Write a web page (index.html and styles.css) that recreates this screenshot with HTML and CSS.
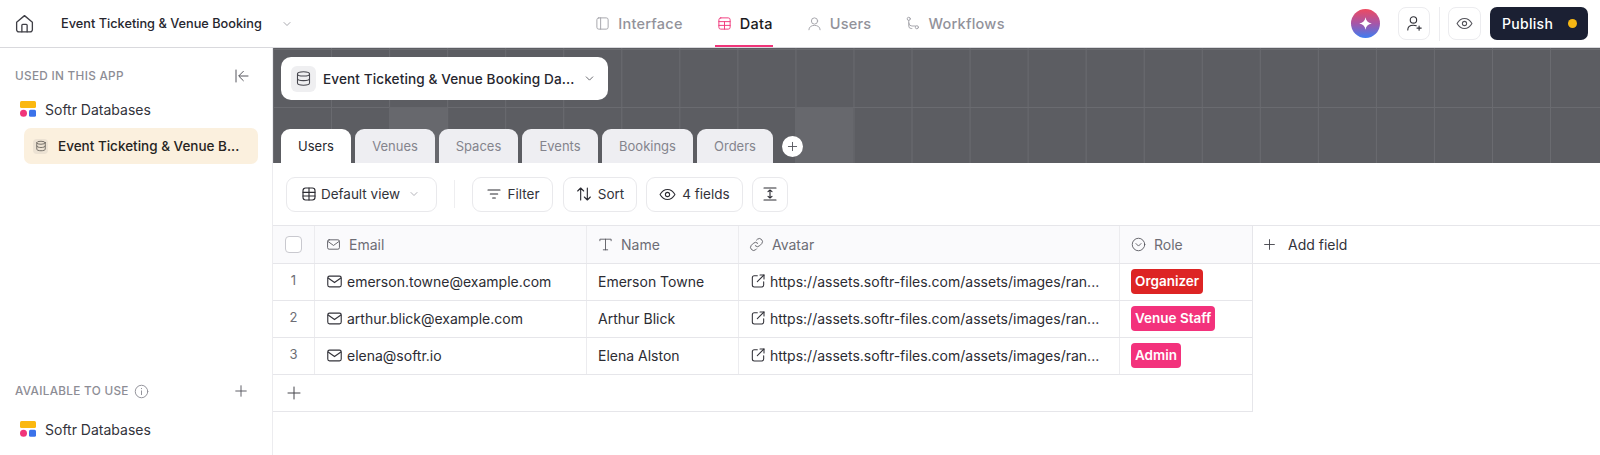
FILE: index.html
```html
<!DOCTYPE html>
<html lang="en">
<head>
<meta charset="utf-8">
<title>Event Ticketing &amp; Venue Booking</title>
<link rel="stylesheet" href="styles.css">
</head>
<body>
<svg class="defs" width="0" height="0" aria-hidden="true">
  <symbol id="i-db" viewBox="0 0 24 24"><ellipse cx="12" cy="5.5" rx="8.5" ry="3"/><path d="M3.5 5.5v13c0 1.7 3.8 3 8.5 3s8.500-1.300 8.500-3v-13"/><path d="M3.500 12c0 1.700 3.800 3 8.500 3s8.500-1.300 8.500-3"/></symbol>
  <symbol id="i-logo" viewBox="0 0 16 16"><rect x="0" y="0" width="16" height="7" rx="1.500" fill="#fbb80f" stroke="none"/><circle cx="3.500" cy="12.300" r="3.500" fill="#f0357a" stroke="none"/><rect x="9" y="8.800" width="7" height="7" rx="1.500" fill="#3b72ea" stroke="none"/></symbol>
  <symbol id="i-mail" viewBox="0 0 24 24"><rect x="2.500" y="4.500" width="19" height="15" rx="2.500"/><path d="M3 7l9 6.500L21 7"/></symbol>
  <symbol id="i-ext" viewBox="0 0 24 24"><path d="M11 4H6.500A3 3 0 0 0 3.500 7v11a3 3 0 0 0 3 3h11a3 3 0 0 0 3-3v-5"/><path d="M11 13l10-10"/><path d="M15 3h6v6"/></symbol>
  <symbol id="i-chev" viewBox="0 0 24 24"><path d="M6 9l6 6 6-6"/></symbol>
  <symbol id="i-plus" viewBox="0 0 24 24"><path d="M12 3v18M3 12h18"/></symbol>
  <symbol id="i-eye" viewBox="0 0 24 24"><path d="M1.500 12S5.500 5 12 5s10.500 7 10.500 7-4 7-10.500 7S1.500 12 1.500 12z"/><circle cx="12" cy="12" r="3"/></symbol>
</svg>

<div class="app">
  <header class="topbar">
    <div class="top-left">
      <svg class="ic home" viewBox="0 0 24 24"><path d="M3 10.500L12 3l9 7.500V19a2.500 2.500 0 0 1-2.500 2.500h-13A2.500 2.500 0 0 1 3 19z"/><path d="M9 21.500V14a1 1 0 0 1 1-1h4a1 1 0 0 1 1 1v7.500"/></svg>
      <span class="app-name">Event Ticketing &amp; Venue Booking</span>
      <svg class="ic app-chev"><use href="#i-chev"/></svg>
    </div>
    <nav class="nav">
      <a class="nav-item"><svg class="ic nav-ic" viewBox="0 0 24 24"><rect x="3" y="3" width="18" height="18" rx="3"/><path d="M9 3v18"/></svg>Interface</a>
      <a class="nav-item active"><svg class="ic nav-ic pink" viewBox="0 0 24 24"><rect x="3" y="3" width="18" height="18" rx="3"/><path d="M3 9h18M3 15h18M12 9v12"/></svg>Data</a>
      <a class="nav-item"><svg class="ic nav-ic" viewBox="0 0 24 24"><circle cx="12" cy="8" r="5"/><path d="M3 22c0-4.500 4-7 9-7s9 2.500 9 7"/></svg>Users</a>
      <a class="nav-item"><svg class="ic nav-ic" viewBox="0 0 24 24"><circle cx="6" cy="4.500" r="2.500"/><circle cx="19" cy="18" r="2.500"/><path d="M6 7v9a4 4 0 0 0 4 4h1M6 11a5 5 0 0 0 5 5h5.500"/></svg>Workflows</a>
    </nav>
    <div class="top-right">
      <span class="ai"><svg viewBox="0 0 24 24" class="ai-star"><path d="M12 2c1 6 4 9 10 10-6 1-9 4-10 10-1-6-4-9-10-10 6-1 9-4 10-10z"/></svg></span>
      <button class="square-btn invite"><svg class="ic" viewBox="0 0 24 24"><circle cx="10.500" cy="7" r="4.500"/><path d="M2.500 21c0-4.500 3.500-6.500 8-6.500 1.500 0 2.800.2 4 .7"/><path d="M18.500 15.500v6M15.500 18.500h6"/></svg></button>
      <span class="top-div"></span>
      <button class="square-btn eye"><svg class="ic"><use href="#i-eye"/></svg></button>
      <button class="publish">Publish<span class="dot"></span></button>
    </div>
  </header>

  <div class="body">
    <aside class="sidebar">
      <div class="side-top">
        <div class="side-head">
          <span class="side-label">USED IN THIS APP</span>
          <svg class="ic collapse" viewBox="0 0 24 24"><path d="M3 3v18M21 12H8M14 5l-7 7 7 7"/></svg>
        </div>
        <div class="source"><svg class="logo"><use href="#i-logo"/></svg>Softr Databases</div>
        <div class="selected">
          <span class="sel-box"><svg class="ic"><use href="#i-db"/></svg></span>
          <span class="sel-text">Event Ticketing &amp; Venue B...</span>
        </div>
      </div>
      <div class="side-bottom">
        <div class="side-head">
          <span class="side-label">AVAILABLE TO USE</span>
          <svg class="ic info" viewBox="0 0 24 24"><circle cx="12" cy="12" r="10"/><path d="M12 11v6M12 7v.5"/></svg>
          <svg class="ic side-plus"><use href="#i-plus"/></svg>
        </div>
        <div class="source"><svg class="logo"><use href="#i-logo"/></svg>Softr Databases</div>
      </div>
    </aside>

    <main class="main">
      <section class="banner">
        <div class="db-select">
          <span class="db-box"><svg class="ic"><use href="#i-db"/></svg></span>
          <span class="db-name">Event Ticketing &amp; Venue Booking Da...</span>
          <svg class="ic db-chev"><use href="#i-chev"/></svg>
        </div>
        <div class="tabs">
          <span class="tab active">Users</span>
          <span class="tab">Venues</span>
          <span class="tab">Spaces</span>
          <span class="tab">Events</span>
          <span class="tab">Bookings</span>
          <span class="tab">Orders</span>
          <span class="tab-add"><svg class="ic"><use href="#i-plus"/></svg></span>
        </div>
      </section>

      <section class="toolbar">
        <button class="tool tool-view"><svg class="ic" viewBox="0 0 24 24"><rect x="3" y="3" width="18" height="18" rx="4"/><path d="M3 9.500h18M3 15h18M12 3v18"/></svg>Default view<svg class="ic tool-chev"><use href="#i-chev"/></svg></button>
        <span class="tool-div"></span>
        <button class="tool tool-filter"><svg class="ic" viewBox="0 0 24 24"><path d="M3 6h18M6.500 12h11M10 18h4"/></svg>Filter</button>
        <button class="tool tool-sort"><svg class="ic" viewBox="0 0 24 24"><path d="M7 21V3M2.500 7.500L7 3l4.500 4.500M17 3v18M12.500 16.500L17 21l4.500-4.500"/></svg>Sort</button>
        <button class="tool tool-fields"><svg class="ic"><use href="#i-eye"/></svg>4 fields</button>
        <button class="tool tool-height"><svg class="ic" viewBox="0 0 24 24"><path d="M3 3h18M3 21h18M12 6v12M9 8.500L12 6l3 2.500M9 15.500l3 2.500 3-2.500"/></svg></button>
      </section>

      <section class="grid">
        <div class="row head">
          <div class="cell num"><span class="check"></span></div>
          <div class="cell c-email"><svg class="ic h-ic"><use href="#i-mail"/></svg>Email</div>
          <div class="cell c-name"><svg class="ic h-ic" viewBox="0 0 24 24"><path d="M3 6V3.500h18V6M12 3.500v17M8.500 20.500h7"/></svg>Name</div>
          <div class="cell c-avatar"><svg class="ic h-ic" viewBox="0 0 24 24"><path d="M10 14a5 5 0 0 0 7 0l3.500-3.500a5 5 0 0 0-7-7L12 5"/><path d="M14 10a5 5 0 0 0-7 0l-3.500 3.500a5 5 0 0 0 7 7L12 19"/></svg>Avatar</div>
          <div class="cell c-role"><svg class="ic h-ic" viewBox="0 0 24 24"><circle cx="12" cy="12" r="10"/><path d="M8 10.500l4 4 4-4"/></svg>Role</div>
          <div class="cell add-field"><svg class="ic"><use href="#i-plus"/></svg>Add field</div>
        </div>
        <div class="row">
          <div class="cell num">1</div>
          <div class="cell c-email"><svg class="ic r-ic"><use href="#i-mail"/></svg>emerson.towne@example.com</div>
          <div class="cell c-name">Emerson Towne</div>
          <div class="cell c-avatar"><svg class="ic r-ic"><use href="#i-ext"/></svg>https://assets.softr-files.com/assets/images/ran...</div>
          <div class="cell c-role"><span class="tag red">Organizer</span></div>
        </div>
        <div class="row">
          <div class="cell num">2</div>
          <div class="cell c-email"><svg class="ic r-ic"><use href="#i-mail"/></svg>arthur.blick@example.com</div>
          <div class="cell c-name">Arthur Blick</div>
          <div class="cell c-avatar"><svg class="ic r-ic"><use href="#i-ext"/></svg>https://assets.softr-files.com/assets/images/ran...</div>
          <div class="cell c-role"><span class="tag pink-tag">Venue Staff</span></div>
        </div>
        <div class="row">
          <div class="cell num">3</div>
          <div class="cell c-email"><svg class="ic r-ic"><use href="#i-mail"/></svg>elena@softr.io</div>
          <div class="cell c-name">Elena Alston</div>
          <div class="cell c-avatar"><svg class="ic r-ic"><use href="#i-ext"/></svg>https://assets.softr-files.com/assets/images/ran...</div>
          <div class="cell c-role"><span class="tag pink-tag">Admin</span></div>
        </div>
        <div class="row add-row"><svg class="ic add-ic"><use href="#i-plus"/></svg></div>
      </section>
    </main>
  </div>
</div>
</body>
</html>
```

FILE: styles.css
```css
* { box-sizing: border-box; }
html, body { margin: 0; height: 100%; overflow: hidden; background: #fff; }
body { font-family: Inter, "Liberation Sans", sans-serif; color: #26262e; font-size: 14px; }
button { font-family: inherit; color: inherit; background: #fff; padding: 0; margin: 0; }
.defs { position: absolute; }
.ic { fill: none; stroke: currentColor; stroke-width: 1.7; stroke-linecap: round; stroke-linejoin: round; flex: none; width: 16px; height: 16px; }

.app { height: 100vh; display: flex; flex-direction: column; }

/* top bar */
.topbar { height: 48px; flex: none; display: grid; grid-template-columns: 1fr auto 1fr; align-items: center; border-bottom: 1px solid #d9d9dd; }
.top-left { display: flex; align-items: center; padding-left: 14px; }
.home { width: 21px; height: 21px; color: #3f3f46; stroke-width: 1.5; }
.app-name { margin-left: 26px; font-size: 12.75px; font-weight: 500; color: #26262e; }
.app-chev { width: 12px; height: 12px; margin-left: 19px; color: #8b8b93; stroke-width: 1.5; }

.nav { display: flex; align-items: stretch; gap: 34px; height: 47px; }
.nav-item { display: flex; align-items: center; gap: 8px; font-size: 14.5px; font-weight: 500; color: #92929a; letter-spacing: .25px; border-bottom: 2px solid transparent; padding-top: 2px; }
.nav-item.active { color: #1a1a20; border-bottom-color: #f0357a; padding-left: 2px; margin-left: -2px; }
.nav-ic { width: 15px; height: 15px; color: #a2a2a9; stroke-width: 1.5; }
.nav-ic.pink { color: #f0357a; }

.top-right { display: flex; align-items: center; justify-content: flex-end; padding-right: 12px; }
.ai { width: 29px; height: 29px; border-radius: 50%; background: linear-gradient(180deg, #ee4a60 0%, #a656a8 50%, #3d7df2 100%); display: flex; align-items: center; justify-content: center; margin-right: 18px; }
.ai-star { width: 15px; height: 15px; fill: #fff; }
.square-btn { width: 32px; height: 33px; border: 1px solid #ececef; border-radius: 8px; display: flex; align-items: center; justify-content: center; }
.invite .ic { width: 17px; height: 17px; color: #33333a; stroke-width: 1.6; }
.eye { width: 33px; margin-left: -1px; }
.eye .ic { width: 17px; height: 17px; color: #55555c; stroke-width: 1.5; }
.top-div { width: 1px; height: 34px; background: #ececef; margin: 0 9px; }
.publish { margin-left: 9px; width: 98px; height: 33px; border: 0; border-radius: 7px; background: #1b2033; color: #fff; font-size: 14px; font-weight: 500; display: flex; align-items: center; padding-left: 12px; letter-spacing: .3px; }
.dot { width: 9px; height: 9px; border-radius: 50%; background: #f6b714; margin-left: 15px; }

/* layout */
.body { flex: 1; display: flex; min-height: 0; }
.sidebar { width: 273px; flex: none; border-right: 1px solid #ececef; display: flex; flex-direction: column; justify-content: space-between; padding-bottom: 17px; }
.side-head { display: flex; align-items: center; height: 16px; padding: 0 22px 0 15px; }
.side-bottom .side-head { padding-right: 24px; }
.side-top { padding-top: 20px; }
.side-label { font-size: 11.75px; font-weight: 500; color: #8d8d95; letter-spacing: .3px; }
.collapse { margin-left: auto; width: 16px; height: 16px; color: #55555c; stroke-width: 1.5; }
.info { width: 15px; height: 15px; margin-left: 5px; color: #8d8d95; stroke-width: 1.5; }
.side-plus { margin-left: auto; width: 14px; height: 14px; color: #55555c; stroke-width: 1.6; }
.source { display: flex; align-items: center; gap: 9px; padding-left: 20px; font-size: 14px; color: #33333a; }
.side-top .source { margin-top: 14px; height: 22px; }
.side-bottom .source { margin-top: 21px; height: 18px; }
.logo { width: 16px; height: 16px; flex: none; }
.selected { margin: 8px 14px 0 24px; height: 36px; border-radius: 7px; background: #fbf0de; display: flex; align-items: center; padding-left: 9px; gap: 10px; }
.sel-box { width: 15px; height: 15px; border-radius: 4px; background: #ece2d3; display: flex; align-items: center; justify-content: center; }
.sel-box .ic { width: 12px; height: 12px; color: #6b6660; stroke-width: 1.8; }
.sel-text { font-size: 13.5px; font-weight: 500; color: #26241f; white-space: nowrap; }

.main { flex: 1; min-width: 0; display: flex; flex-direction: column; }

/* banner */
.banner {
  height: 115px; flex: none; padding: 9px 0 0 8px; display: flex; flex-direction: column;
  background-color: #5c5d62;
  background-image:
    linear-gradient(#67686d, #67686d),
    linear-gradient(#67686d, #67686d),
    linear-gradient(to right, #6a6b70 1px, transparent 1px),
    linear-gradient(to bottom, #6a6b70 1px, transparent 1px);
  background-size: 58px 56px, 58px 56px, 58.06px 58px, 58px 58px;
  background-position: 116px 59px, 522px 59px, 0 0, 0 1px;
  background-repeat: no-repeat, no-repeat, repeat, repeat;
}
.db-select { width: 327px; height: 43px; flex: none; background: #fff; border-radius: 10px; display: flex; align-items: center; padding-left: 10px; }
.db-box { width: 25px; height: 26px; background: #efeff1; border-radius: 6px; display: flex; align-items: center; justify-content: center; }
.db-box .ic { width: 17px; height: 17px; color: #47474e; stroke-width: 1.5; }
.db-name { margin-left: 7px; font-size: 13.6px; font-weight: 500; white-space: nowrap; color: #26262e; letter-spacing: .1px; }
.db-chev { width: 13px; height: 13px; margin-left: auto; margin-right: 12px; color: #55555c; stroke-width: 1.6; }

.tabs { display: flex; align-items: flex-end; gap: 4px; margin-top: 29px; height: 34px; }
.tab { height: 34px; display: flex; align-items: center; justify-content: center; padding: 0 17px; background: #eeeef2; border-radius: 9px 9px 0 0; font-size: 13px; color: #84848d; }
.tab:nth-child(1) { width: 70px; padding: 0; }
.tab:nth-child(2) { width: 80px; padding: 0; }
.tab:nth-child(3) { width: 79px; padding: 0; }
.tab:nth-child(4) { width: 76px; padding: 0; }
.tab:nth-child(5) { width: 91px; padding: 0; }
.tab:nth-child(6) { width: 76px; padding: 0; }
.tab.active { background: #fff; color: #26262e; }
.tab-add { width: 21px; height: 21px; border-radius: 50%; background: #fff; display: flex; align-items: center; justify-content: center; align-self: center; margin-left: 5px; }
.tab-add .ic { width: 11px; height: 11px; color: #55555c; stroke-width: 2; }

/* toolbar */
.toolbar { height: 62px; flex: none; display: flex; align-items: center; padding-left: 13px; gap: 10px; }
.tool { height: 35px; border: 1px solid #e9e9ec; border-radius: 9px; display: flex; align-items: center; justify-content: center; gap: 6px; font-size: 13.5px; color: #33333a; }
.tool .ic { width: 16px; height: 16px; color: #2c2c33; stroke-width: 1.7; }
.tool-view { width: 151px; gap: 4px; padding-right: 2px; }
.tool-view .tool-chev { width: 12px; height: 12px; margin-left: 4px; color: #9a9aa2; stroke-width: 1.5; }
.tool-div { width: 1px; height: 28px; background: #eeeef0; margin: 0 7px; }
.tool-filter { width: 81px; }
.tool-sort { width: 74px; }
.tool-fields { width: 97px; margin-left: -1px; }
.tool-fields .ic { width: 17px; height: 17px; stroke-width: 1.5; }
.tool-height { width: 36px; margin-left: -1px; }

/* grid */
.grid { display: flex; flex-direction: column; }
.row { display: flex; height: 37px; flex: none; width: 980px; border-bottom: 1px solid #e6e6ea; border-right: 1px solid #e6e6ea; }
.row.head { height: 39px; width: auto; border-top: 1px solid #e6e6ea; border-right: 0; }
.cell { display: flex; align-items: center; border-right: 1px solid #ececef; font-size: 14px; color: #2c2c33; white-space: nowrap; flex: none; padding-bottom: 2px; }
.head .cell { background: #fafafc; color: #6d6d75; padding-bottom: 0; }
.head .add-field { background: #fff; color: #33333a; border-right: 0; flex: 1; padding-left: 10px; gap: 12px; }
.add-field .ic { width: 13px; height: 13px; color: #44444b; }
.cell.num { width: 42px; justify-content: center; color: #6d6d75; font-size: 13px; padding-bottom: 4px; }
.head .cell.num { padding-bottom: 0; }
.check { width: 17px; height: 17px; background: #fff; border: 1px solid #c9c9cf; border-radius: 4px; }
.c-email { width: 272px; padding-left: 11px; }
.c-name { width: 152px; padding-left: 11px; }
.c-avatar { width: 381px; padding-left: 11px; }
.head .c-avatar { padding-left: 10px; }
.c-role { width: 132px; padding-left: 11px; border-right: 0; }
.head .c-role { width: 133px; border-right: 1px solid #e6e6ea; }
.h-ic { width: 15px; height: 15px; color: #55555c; stroke-width: 1.4; margin-right: 8px; }
.r-ic { width: 17px; height: 17px; color: #33333a; stroke-width: 1.6; margin-right: 4px; }
.c-avatar .r-ic { width: 16px; height: 16px; }
.tag { height: 25px; padding: 0 4px; display: flex; align-items: center; border-radius: 4px; color: #fff; font-size: 13.5px; font-weight: 600; }
.tag.red { background: #dd2424; }
.tag.pink-tag { background: #f3327c; }
.add-row { align-items: center; padding-left: 13px; }
.add-ic { width: 16px; height: 16px; color: #44444b; stroke-width: 1.5; }
```
